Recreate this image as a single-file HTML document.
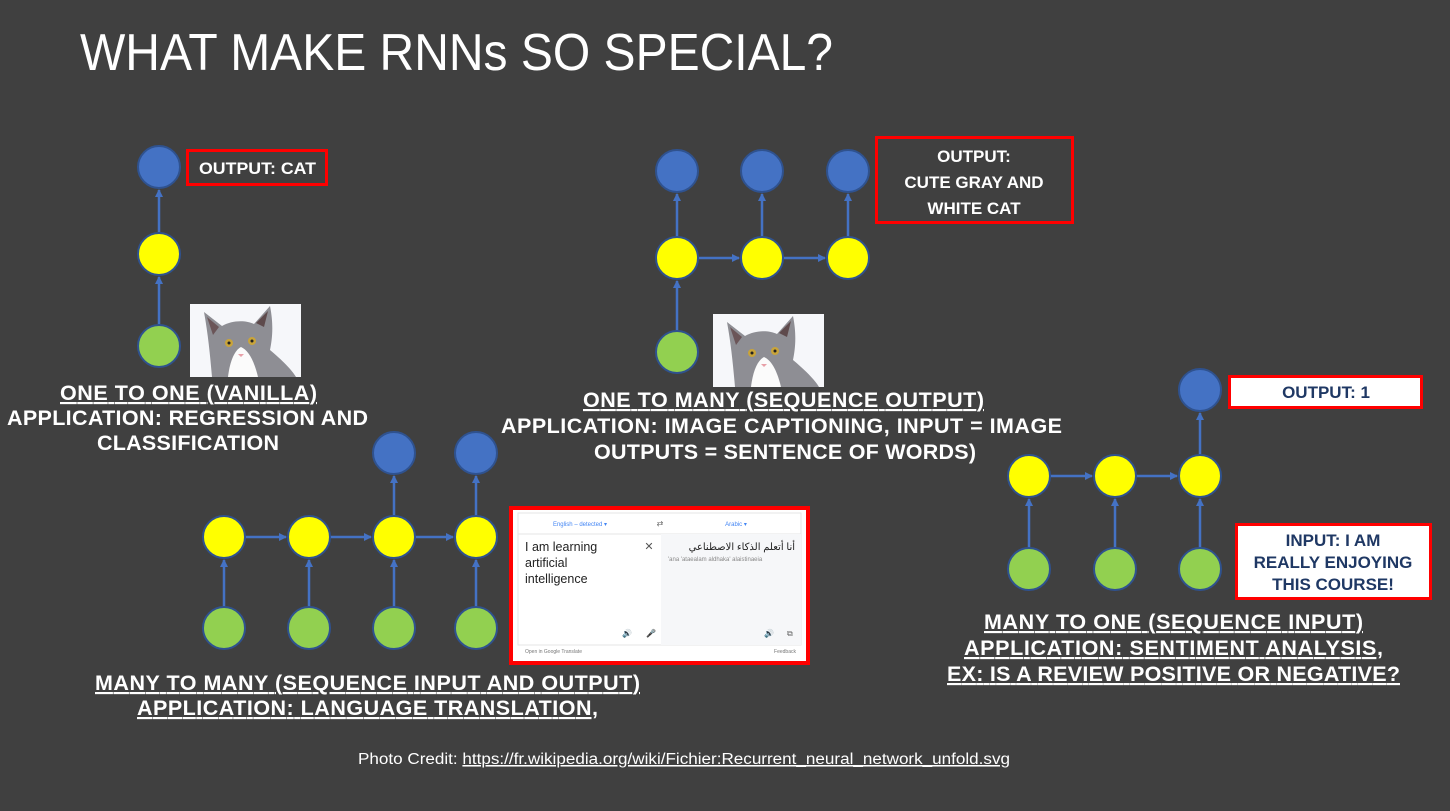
<!DOCTYPE html>
<html><head><meta charset="utf-8"><style>
html,body{margin:0;padding:0;background:#404040;}
svg{display:block}
text{font-family:"Liberation Sans",Arial,sans-serif}
</style></head><body>
<svg width="1450" height="811" viewBox="0 0 1450 811" xmlns="http://www.w3.org/2000/svg">
<defs>
<marker id="ar" markerWidth="8" markerHeight="8" refX="7" refY="4" orient="auto" markerUnits="userSpaceOnUse"><path d="M0,0 L8,4 L0,8 z" fill="#4472c4"/></marker>
<g id="cat">
<rect width="111" height="73" fill="#f6f7fa"/>
<path d="M22,73 C20,50 18,30 14,8 L32,22 C42,16 56,16 64,20 L80,2 C84,22 82,36 80,46 C92,56 102,66 106,73 Z" fill="#8e8e94"/>
<path d="M38,73 C40,56 45,46 51,43 C58,46 64,56 68,73 Z" fill="#fbfbfb"/>
<path d="M17,13 L29,23 L23,31 Z" fill="#6b5558"/>
<path d="M78,7 L74,23 L66,19 Z" fill="#5e4a4c"/>
<circle cx="39" cy="39" r="4" fill="#c9a43a"/><circle cx="62" cy="37" r="4" fill="#c9a43a"/>
<circle cx="39" cy="39" r="1.5" fill="#222"/><circle cx="62" cy="37" r="1.5" fill="#222"/>
<path d="M48,50 L54,50 L51,53 Z" fill="#e8a0a8"/>
</g>
</defs>

<text x="80" y="70" font-size="52" fill="#fff" textLength="753" lengthAdjust="spacingAndGlyphs">WHAT MAKE RNNs SO SPECIAL?</text>

<g stroke="#4472c4" stroke-width="2.5" fill="none" marker-end="url(#ar)">
<line x1="159" y1="232" x2="159" y2="190"/>
<line x1="159" y1="325" x2="159" y2="277"/>
<line x1="677" y1="237" x2="677" y2="194"/>
<line x1="762" y1="237" x2="762" y2="194"/>
<line x1="848" y1="237" x2="848" y2="194"/>
<line x1="677" y1="331" x2="677" y2="281"/>
<line x1="698" y1="258" x2="739" y2="258"/>
<line x1="783" y1="258" x2="825" y2="258"/>
<line x1="1200" y1="455" x2="1200" y2="413"/>
<line x1="1029" y1="548" x2="1029" y2="499"/>
<line x1="1115" y1="548" x2="1115" y2="499"/>
<line x1="1200" y1="548" x2="1200" y2="499"/>
<line x1="1050" y1="476" x2="1092" y2="476"/>
<line x1="1136" y1="476" x2="1177" y2="476"/>
<line x1="394" y1="516" x2="394" y2="476"/>
<line x1="476" y1="516" x2="476" y2="476"/>
<line x1="224" y1="607" x2="224" y2="560"/>
<line x1="309" y1="607" x2="309" y2="560"/>
<line x1="394" y1="607" x2="394" y2="560"/>
<line x1="476" y1="607" x2="476" y2="560"/>
<line x1="245" y1="537" x2="286" y2="537"/>
<line x1="330" y1="537" x2="371" y2="537"/>
<line x1="415" y1="537" x2="453" y2="537"/>
</g>

<g stroke="#2f528f" stroke-width="2">
<circle cx="159" cy="167" r="21" fill="#4472c4"/>
<circle cx="159" cy="254" r="21" fill="#ffff00"/>
<circle cx="159" cy="346" r="21" fill="#92d050"/>
<circle cx="677" cy="171" r="21" fill="#4472c4"/>
<circle cx="762" cy="171" r="21" fill="#4472c4"/>
<circle cx="848" cy="171" r="21" fill="#4472c4"/>
<circle cx="677" cy="258" r="21" fill="#ffff00"/>
<circle cx="762" cy="258" r="21" fill="#ffff00"/>
<circle cx="848" cy="258" r="21" fill="#ffff00"/>
<circle cx="677" cy="352" r="21" fill="#92d050"/>
<circle cx="1200" cy="390" r="21" fill="#4472c4"/>
<circle cx="1029" cy="476" r="21" fill="#ffff00"/>
<circle cx="1115" cy="476" r="21" fill="#ffff00"/>
<circle cx="1200" cy="476" r="21" fill="#ffff00"/>
<circle cx="1029" cy="569" r="21" fill="#92d050"/>
<circle cx="1115" cy="569" r="21" fill="#92d050"/>
<circle cx="1200" cy="569" r="21" fill="#92d050"/>
<circle cx="394" cy="453" r="21" fill="#4472c4"/>
<circle cx="476" cy="453" r="21" fill="#4472c4"/>
<circle cx="224" cy="537" r="21" fill="#ffff00"/>
<circle cx="309" cy="537" r="21" fill="#ffff00"/>
<circle cx="394" cy="537" r="21" fill="#ffff00"/>
<circle cx="476" cy="537" r="21" fill="#ffff00"/>
<circle cx="224" cy="628" r="21" fill="#92d050"/>
<circle cx="309" cy="628" r="21" fill="#92d050"/>
<circle cx="394" cy="628" r="21" fill="#92d050"/>
<circle cx="476" cy="628" r="21" fill="#92d050"/>
</g>

<use href="#cat" x="190" y="304"/>
<use href="#cat" x="713" y="314"/>

<rect x="187.5" y="150.5" width="139" height="34" fill="none" stroke="#ff0000" stroke-width="3"/>
<text x="199" y="174" font-size="17" font-weight="bold" fill="#fff" textLength="117" lengthAdjust="spacingAndGlyphs">OUTPUT: CAT</text>

<rect x="876.5" y="137.5" width="196" height="85" fill="none" stroke="#ff0000" stroke-width="3"/>
<g font-size="17" font-weight="bold" fill="#fff" text-anchor="middle">
<text x="974" y="162">OUTPUT:</text>
<text x="974" y="188">CUTE GRAY AND</text>
<text x="974" y="214">WHITE CAT</text>
</g>

<rect x="1229.5" y="376.5" width="192" height="31" fill="#fff" stroke="#ff0000" stroke-width="3"/>
<text x="1326" y="398" font-size="17" font-weight="bold" fill="#1f3864" text-anchor="middle">OUTPUT: 1</text>

<rect x="1236.5" y="524.5" width="194" height="74" fill="#fff" stroke="#ff0000" stroke-width="3"/>
<g font-size="17" font-weight="bold" fill="#1f3864" text-anchor="middle">
<text x="1333" y="546">INPUT: I AM</text>
<text x="1333" y="568">REALLY ENJOYING</text>
<text x="1333" y="590">THIS COURSE!</text>
</g>

<rect x="511" y="508" width="297" height="155" fill="#fff" stroke="#ff0000" stroke-width="4"/>
<rect x="518" y="513" width="283" height="132" fill="#fff" stroke="#e6e6e6"/>
<line x1="518" y1="534" x2="801" y2="534" stroke="#e6e6e6"/>
<rect x="661" y="534" width="140" height="111" fill="#f6f7f9"/>
<g font-size="6" fill="#4285f4" text-anchor="middle">
<text x="580" y="526">English – detected ▾</text>
<text x="736" y="526">Arabic ▾</text>
</g>
<text x="660" y="526" font-size="8" fill="#666" text-anchor="middle">⇄</text>
<g font-size="12.5" fill="#222">
<text x="525" y="551">I am learning</text>
<text x="525" y="567">artificial</text>
<text x="525" y="583">intelligence</text>
</g>
<text x="649" y="550" font-size="11" fill="#555" text-anchor="middle">✕</text>
<text x="795" y="550" font-size="10" fill="#222" text-anchor="end" font-family="'Noto Sans CJK SC','DejaVu Sans',sans-serif">أنا أتعلم الذكاء الاصطناعي</text>
<text x="668" y="561" font-size="6" fill="#888">'ana 'ataealam aldhaka' alaistinaeia</text>
<g font-size="8" fill="#666">
<text x="622" y="636">🔊</text><text x="646" y="636">🎤</text>
<text x="764" y="636">🔊</text><text x="787" y="636">⧉</text>
</g>
<g font-size="5" fill="#777">
<text x="525" y="653">Open in Google Translate</text>
<text x="796" y="653" text-anchor="end">Feedback</text>
</g>

<g font-size="21.5" font-weight="bold" fill="#fff" lengthAdjust="spacingAndGlyphs">
<text x="60" y="400" textLength="257" text-decoration="underline">ONE TO ONE (VANILLA)</text>
<text x="7" y="425" textLength="361">APPLICATION: REGRESSION AND</text>
<text x="97" y="450" textLength="182">CLASSIFICATION</text>

<text x="583" y="407" textLength="401" text-decoration="underline">ONE TO MANY (SEQUENCE OUTPUT)</text>
<text x="501" y="433" textLength="561">APPLICATION: IMAGE CAPTIONING, INPUT = IMAGE</text>
<text x="594" y="459" textLength="382">OUTPUTS = SENTENCE OF WORDS)</text>

<text x="984" y="629" textLength="379" text-decoration="underline">MANY TO ONE  (SEQUENCE INPUT)</text>
<text x="964" y="655" textLength="419" text-decoration="underline">APPLICATION: SENTIMENT ANALYSIS, </text>
<text x="947" y="681" textLength="453" text-decoration="underline">EX: IS A REVIEW POSITIVE OR NEGATIVE? </text>

<text x="95" y="690" textLength="545" text-decoration="underline">MANY TO MANY (SEQUENCE INPUT AND OUTPUT)</text>
<text x="137" y="715" textLength="461" text-decoration="underline">APPLICATION: LANGUAGE TRANSLATION, </text>
</g>

<text x="358" y="764" font-size="15.5" fill="#fff" textLength="652" lengthAdjust="spacingAndGlyphs">Photo Credit: <tspan text-decoration="underline">https://fr.wikipedia.org/wiki/Fichier:Recurrent_neural_network_unfold.svg</tspan></text>
</svg>
</body></html>
